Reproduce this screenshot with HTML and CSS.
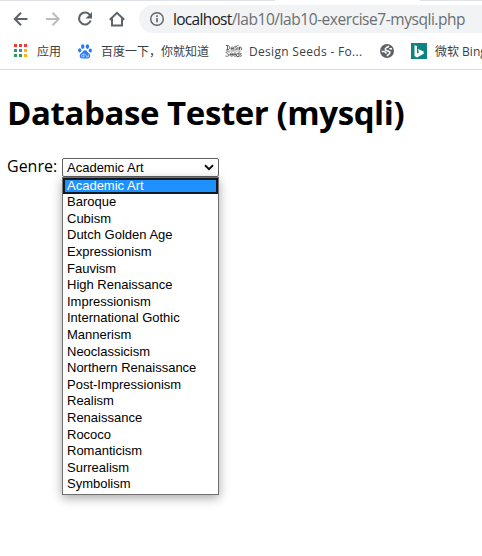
FILE: index.html
```html
<!DOCTYPE html>
<html lang="en">
<head>
<meta charset="utf-8">
<title>Database Tester</title>
<link rel="stylesheet" href="styles.css">
</head>
<body>
<header class="browser">
  <div class="tabs"><span class="tab-edge left"></span><span class="tab-edge right"></span></div>
  <div class="toolbar">
    <svg class="nav" width="16" height="16" viewBox="0 0 16 16"><path d="M14.5 8H2M8 1.8L1.8 8L8 14.2" fill="none" stroke="#5f6368" stroke-width="2"/></svg>
    <svg class="nav" width="16" height="16" viewBox="0 0 16 16"><path d="M1 8h12.5M7.5 1.8L13.7 8L7.5 14.2" fill="none" stroke="#babcbe" stroke-width="2"/></svg>
    <svg class="nav" width="16" height="16" viewBox="0 0 16 16"><path d="M12.9 4A6 6 0 1 0 13.7 9.5" fill="none" stroke="#5f6368" stroke-width="2.1"/><path d="M15 1v6.5H8.5z" fill="#5f6368"/></svg>
    <svg class="nav" width="16" height="16" viewBox="0 0 16 16"><path d="M.8 8.7L8 1.8l7.2 6.9M3 7.5V14.5h10V7.5" fill="none" stroke="#5f6368" stroke-width="2"/></svg>
    <div class="address">
      <svg width="16" height="16" viewBox="0 0 16 16"><circle cx="8" cy="8" r="6.3" fill="none" stroke="#5f6368" stroke-width="1.4"/><path d="M8 7v4.3M8 4.2v1.7" stroke="#5f6368" stroke-width="1.6"/></svg>
      <span class="url"><b>localhost</b>/lab10/lab10-exercise7-mysqli.php</span>
    </div>
  </div>
  <nav class="bookmarks">
    <a class="mark apps">
      <svg width="14" height="14" viewBox="0 0 14 14"><path d="M0 0h3v3H0zM5 0h3v3H5zM10 0h3v3h-3z" fill="#f03a32"/><path d="M0 5h3v3H0zM0 10h3v3H0zM5 10h3v3H5z" fill="#2b9b58"/><path d="M5 5h3v3H5z" fill="#2789f5"/><path d="M10 5h3v3h-3zM10 10h3v3h-3z" fill="#fbb50b"/></svg>
      <span>应用</span>
    </a>
    <a class="mark baidu">
      <svg width="14" height="15" viewBox="0 0 14 15"><g fill="#2878ff"><ellipse cx="4.7" cy="2.6" rx="1.7" ry="2.3"/><ellipse cx="9.4" cy="2.6" rx="1.7" ry="2.3"/><ellipse cx="1.7" cy="6.3" rx="1.6" ry="2.1"/><ellipse cx="12.3" cy="6.5" rx="1.6" ry="2.1"/><path d="M7 6.2c2 0 2.3 2 4 3.4s1.7 4.8-1.2 4.8c-1.3 0-4.3 0-5.6 0-3 0-3-3.4-1.2-4.8S5 6.2 7 6.2z"/></g><path d="M6 9v4H4.7a1.2 1.2 0 0 1 0-2.4H6M8 10.3v1.8q0 .9 1 .9h1.3v-2.7" fill="none" stroke="#fff" stroke-width=".6"/></svg>
      <span>百度一下，你就知道</span>
    </a>
    <a class="mark seeds">
      <svg width="17" height="14" viewBox="0 0 17 14"><g fill="none" stroke="#626262" stroke-width="1"><path d="M1 1.5c5-1 5 5 0 4.500M2.500 1v5M6 4.500h3c0-2-3-2-3 0s2 2 3 1M12 2.500c-3-1-3 1-1 1.500s1 2-1.500 1.500M13 3v3M13 1v1M14.500 6V3q2-1 2 3M4.500 8c-4-1-4 1-1.500 2s0 3-2.500 2M5 10.500h3c0-2-3-2-3 0s2 2 3 1M8.500 10.500h3c0-2-3-2-3 0s2 2 3 1M14 7.500v5q-3 1-2.500-1.500t2.500-1M16.500 9.500c-2-.5-2 1-.5 1.500s0 2-1.500 1"/></g><path d="M1 7h15" stroke="#aaa"/></svg>
      <span>Design Seeds - Fo...</span>
    </a>
    <a class="mark globe">
      <svg width="14" height="14" viewBox="0 0 14 14"><circle cx="7" cy="7" r="7" fill="#5f6368"/><path d="M9 2.300L6.500 3.500Q4.300 5 6 6.300L9.800 7.800Q10.500 10 6.800 11.700M1.700 7.500H4.500L6.500 9.500M9.300 4.700H12" fill="none" stroke="#fff" stroke-width="1.500"/></svg>
    </a>
    <a class="mark bing">
      <svg width="16" height="16" viewBox="0 0 16 16"><path d="M0 0h16v16H0z" fill="#0c8484"/><path d="M3.500 2.200L6 3.100v7.300l1.900-1-1-3.300L12.700 8.500v2.300L6 14.500l-2.500-1.600z" fill="#fff"/></svg>
      <span>微软 Bing</span>
    </a>
  </nav>
</header>
<main>
  <h1>Database Tester (mysqli)</h1>
  <div class="field">
    <label>Genre:</label>
    <div class="select">
      <span>Academic Art</span>
      <svg width="10" height="7" viewBox="0 0 10 7"><path d="M1 1.300L5 5.200L9 1.300" fill="none" stroke="#111" stroke-width="2"/></svg>
      <ul class="options">
        <li class="selected">Academic Art</li><li>Baroque</li><li>Cubism</li><li>Dutch Golden Age</li><li>Expressionism</li><li>Fauvism</li><li>High Renaissance</li><li>Impressionism</li><li>International Gothic</li><li>Mannerism</li><li>Neoclassicism</li><li>Northern Renaissance</li><li>Post-Impressionism</li><li>Realism</li><li>Renaissance</li><li>Rococo</li><li>Romanticism</li><li>Surrealism</li><li>Symbolism</li>
      </ul>
    </div>
  </div>
</main>
</body>
</html>
```
FILE: styles.css
```css
* { box-sizing: border-box; }
body { margin: 0; height: 556px; overflow: hidden; background: #fff; color: #000; font-family: "Open Sans", "Noto Sans CJK SC", sans-serif; }
svg { display: block; flex: none; }
.browser { height: 70px; border-bottom: 1px solid #d9dadc; overflow: hidden; }
.tabs { display: flex; justify-content: space-between; height: 1px; }
.tab-edge { background: #dee1e6; }
.left { width: 275px; }
.right { width: 62px; }
.toolbar { display: flex; align-items: center; height: 36px; padding-left: 13px; }
.nav { margin-right: 16px; }
.address { display: flex; align-items: center; flex: 1; height: 28px; margin-left: -2px; padding-left: 10px; border-radius: 14px 0 0 14px; background: #f1f3f4; }
.url { margin-left: 8px; white-space: nowrap; font-size: 15.5px; line-height: 22px; letter-spacing: -.45px; color: #6b6e72; }
.url b { font-weight: 400; letter-spacing: -.7px; color: #202124; }
.bookmarks { display: flex; align-items: center; height: 28px; font-size: 12px; color: #3c4043; white-space: nowrap; }
.mark { display: flex; align-items: center; flex: none; }
.apps { width: 64px; padding-left: 14px; gap: 9px; }
.baidu { width: 161px; padding-left: 14px; gap: 9px; }
.seeds { width: 154px; gap: 7px; letter-spacing: .31px; }
.globe { width: 32px; padding-left: 1px; }
.bing { gap: 8px; }
main { padding: 0 7px; }
h1 { margin: 20px 0 0; font-size: 33px; line-height: 46px; font-weight: 700; letter-spacing: -.42px; white-space: nowrap; }
.field { display: flex; height: 20px; margin-top: 21px; align-items: center; }
label { width: 55px; font-size: 16px; line-height: 20px; margin-top: -2px; }
.select { position: relative; display: flex; align-items: center; justify-content: space-between; width: 157px; height: 19px; padding: 0 4px; border: 1px solid #606060; border-radius: 2px; font: 13px/17px "Liberation Sans", sans-serif; }
.options { position: absolute; top: 18px; left: -1px; width: 157px; height: 318px; margin: 0; padding: 0; list-style: none; border: 1px solid #707070; background: #fff; box-shadow: 0 3px 10px rgba(0,0,0,.35); }
.options li { height: 16.610px; padding-left: 4px; line-height: 16.610px; white-space: nowrap; }
.options .selected { background: #1e90ff; color: #fff; box-shadow: inset 0 0 0 2px #101820; }
```
